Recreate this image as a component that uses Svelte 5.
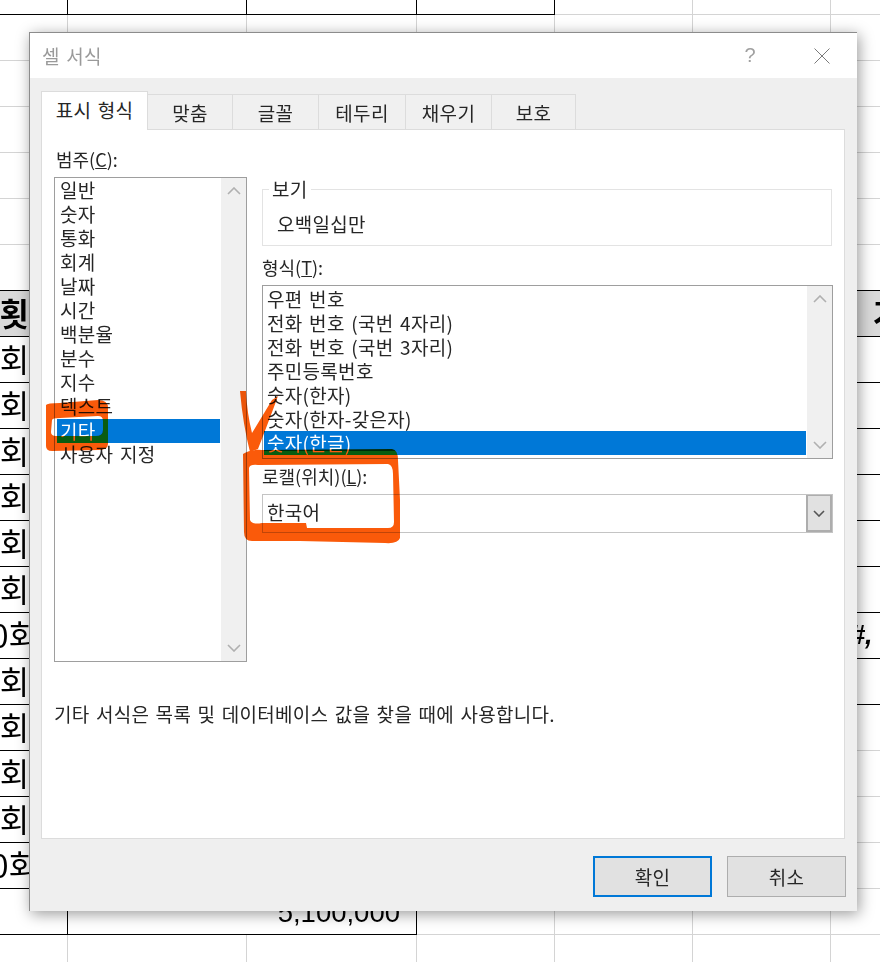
<script>
  // Sheet behind the dialog: rows of 46px, line index = (y - 14) / 46
  const rowCount = 22;
  const colCount = 7;
  const counts = ['1', '2', '3', '4', '5', '6', '10', '2', '3', '4', '5', '10'];

  const tabs = ['표시 형식', '맞춤', '글꼴', '테두리', '채우기', '보호'];
  const categories = ['일반', '숫자', '통화', '회계', '날짜', '시간', '백분율', '분수', '지수', '텍스트', '기타', '사용자 지정'];
  const formats = ['우편 번호', '전화 번호 (국번 4자리)', '전화 번호 (국번 3자리)', '주민등록번호', '숫자(한자)', '숫자(한자-갖은자)', '숫자(한글)'];

  let activeCategory = $state('기타');
  let activeFormat = $state('숫자(한글)');

  function cellClass(r, c) {
    let cls = 'cell';
    if (r === 0 && c <= 3) cls += ' bb br';
    if (r === 6 && c <= 2) cls += ' bb';
    if (r >= 7 && r <= 19 && c <= 2) cls += ' bb br';
    if (r === 6 && c === 6) cls += ' bb';
    if (r >= 7 && r <= 15 && c === 6) cls += ' bb';
    if (r === 7 && (c <= 2 || c === 6)) cls += ' head';
    return cls;
  }

  function cellText(r, c) {
    if (c === 0 && r === 7) return '횟수';
    if (c === 0 && r >= 8 && r <= 19) return counts[r - 8] + '회';
    if (c === 6 && r === 7) return '가격';
    if (c === 6 && r === 14) return '##,';
    return '';
  }
</script>

<div class="page">
  <div class="sheet">
    {#each Array(rowCount) as _, r}
      {#if r === 20}
        <div class="cell bb br"></div>
        <div class="cell bb br sum">5,100,000</div>
        {#each [3, 4, 5, 6] as c}
          <div class={cellClass(r, c)}></div>
        {/each}
      {:else}
        {#each Array(colCount) as _, c}
          <div
            class="{cellClass(r, c)} {c === 0 ? 'first' : ''} {c === 6 ? 'last' : ''} {r === 14 && c === 6 ? 'fmt' : ''}"
          >{cellText(r, c)}</div>
        {/each}
      {/if}
    {/each}
  </div>

  <div class="dialog">
    <div class="titlebar">
      <span class="title">셀 서식</span>
      <span class="help">?</span>
      <svg class="close" width="16" height="16" viewBox="0 0 16 16">
        <path d="M0.5 0.5L15.5 15.5M15.5 0.5L0.5 15.5" stroke="#7a7a7a" stroke-width="1" fill="none" />
      </svg>
    </div>

    <div class="body">
      <div class="tabs">
        {#each tabs as tab, i}
          <div class="tab" class:active={i === 0}>{tab}</div>
        {/each}
      </div>

      <div class="panel">
        <div class="columns">
          <div class="left">
            <div class="label">범주(<u>C</u>):</div>
            <div class="list catlist">
              <div class="items">
                {#each categories as item}
                  <div class="item" class:selected={item === activeCategory}>{item}</div>
                {/each}
              </div>
              <div class="scroll">
                <svg width="14" height="8" viewBox="0 0 14 8"><path d="M1 7L7 1L13 7" /></svg>
                <svg width="14" height="8" viewBox="0 0 14 8"><path d="M1 1L7 7L13 1" /></svg>
              </div>
            </div>
          </div>

          <div class="right">
            <fieldset class="sample">
              <legend>보기</legend>
              <div class="sample-text">오백일십만</div>
            </fieldset>

            <div class="label format-label">형식(<u>T</u>):</div>
            <div class="list fmtlist">
              <div class="items">
                {#each formats as item}
                  <div class="item" class:selected={item === activeFormat}>{item}</div>
                {/each}
              </div>
              <div class="scroll">
                <svg width="14" height="8" viewBox="0 0 14 8"><path d="M1 7L7 1L13 7" /></svg>
                <svg width="14" height="8" viewBox="0 0 14 8"><path d="M1 1L7 7L13 1" /></svg>
              </div>
            </div>

            <div class="label locale-label">로캘(위치)(<u>L</u>):</div>
            <div class="combo">
              <span class="combo-text">한국어</span>
              <div class="combo-btn">
                <svg width="12" height="7" viewBox="0 0 12 7"><path d="M1 1L6 6L11 1" /></svg>
              </div>
            </div>
          </div>
        </div>

        <div class="desc">기타 서식은 목록 및 데이터베이스 값을 찾을 때에 사용합니다.</div>
      </div>

      <div class="footer">
        <button class="btn primary">확인</button>
        <button class="btn">취소</button>
      </div>
    </div>
  </div>

  <!-- hand-drawn pen marks over the screenshot -->
  <svg class="marks" width="880" height="962" viewBox="0 0 880 962">
    <path
      fill-rule="evenodd"
      d="M46 405 Q47 403 60 403 L98 400 Q108 400 108 408 L108 444 Q108 450 98 450 L52 451 Q46 451 46 446 Z
         M52 420 Q52 418 60 418 L98 416 Q103 416 103 421 L103 430 Q103 436 96 436 L56 436 Q51 436 51 432 Z"
    />
    <path d="M240 391 L246 391 Q247 413 252 433 L272 400 L278 396 Q270 418 258 449 L250 452 Q243 425 240 391 Z" />
    <path
      fill-rule="evenodd"
      d="M243 454 Q250 449 262 450 L392 449 Q398 450 398 460 L400 500 L400 538 Q398 544 385 543 L300 541 L252 541 Q244 541 244 532 Z
         M249 468 Q250 464 258 465 L388 464 Q393 465 393 474 L394 522 Q394 528 388 528 L307 528 L306 523 L262 523 Q252 525 250 520 Z"
    />
  </svg>
  <!-- where the pen crosses the blue rows it turns green -->
  <svg class="marks-on-blue" width="880" height="962" viewBox="0 0 880 962">
    <path d="M103 419H108V443H57V436H96Q103 436 103 430Z" />
    <path d="M264 451H398V455H264Z" />
  </svg>
</div>

<style>
  :global(body) {
    margin: 0;
    background: #fff;
  }

  .page {
    position: relative;
    width: 880px;
    height: 962px;
    overflow: hidden;
    font-family: "Noto Sans CJK KR", "Noto Sans", sans-serif;
    color: #262626;
  }

  /* background spreadsheet */
  .sheet {
    display: grid;
    grid-template-columns: 98px 179px 170px 138px 138px 138px 169px;
    grid-auto-rows: 46px;
    margin: -31px 0 0 -30px;
    width: 1030px;
  }

  .cell {
    box-sizing: border-box;
    border-right: 1px solid #d4d4d4;
    border-bottom: 1px solid #d4d4d4;
    color: #000;
    font-size: 32px;
    line-height: 42px;
    white-space: nowrap;
    overflow: hidden;
  }

  .cell.bb {
    border-bottom-color: #000;
  }

  .cell.br {
    border-right-color: #000;
  }

  .first {
    text-align: center;
    padding-right: 26px;
  }

  .last {
    padding-left: 42px;
  }

  .head {
    background: #d9d9d9;
    font-weight: 700;
  }

  .head.first {
    padding: 0 0 0 21px;
  }

  .fmt {
    padding-left: 4px;
    font-family: "Liberation Sans", sans-serif;
    font-weight: 700;
    font-style: italic;
    font-size: 27px;
    line-height: 44px;
  }

  .sum {
    grid-column: span 2;
    text-align: right;
    padding-right: 16px;
    font-family: "Liberation Sans", sans-serif;
    font-size: 27.5px;
    line-height: 48px;
  }

  /* dialog */
  .dialog {
    position: absolute;
    left: 29px;
    top: 32px;
    width: 827px;
    height: 878px;
    border-top: 1px solid #8c8c8c;
    border-left: 1px solid #8c8c8c;
    box-shadow: 2px 3px 14px rgba(0, 0, 0, 0.4);
    display: flex;
    flex-direction: column;
    background: #efefef;
    font-size: 19px;
    letter-spacing: 0.3px;
    word-spacing: 2px;
  }

  .titlebar {
    height: 45px;
    background: #fff;
    display: flex;
    align-items: center;
    padding: 0 27px 0 12px;
    flex: none;
  }

  .title {
    color: #9a9a9a;
    font-size: 19px;
    flex: 1;
  }

  .help {
    color: #a0a0a0;
    font-size: 20px;
    font-family: "Liberation Sans", sans-serif;
    margin-right: 58px;
  }

  .body {
    flex: 1;
    padding: 13px 12px 0 11px;
    display: flex;
    flex-direction: column;
  }

  .tabs {
    display: flex;
    align-items: flex-end;
    height: 38px;
    flex: none;
  }

  .tab {
    box-sizing: border-box;
    height: 36px;
    margin-bottom: -1px;
    border: 1px solid #dcdcdc;
    border-left-width: 0;
    background: #f0f0f0;
    text-align: center;
    line-height: 35px;
    width: 86px;
    position: relative;
  }

  .tab:nth-child(1) {
    width: 107px;
    height: 39px;
    border-left-width: 1px;
    border-bottom: none;
    background: #fff;
    line-height: 36px;
    z-index: 1;
  }

  .tab:nth-child(2) {
    width: 85px;
  }

  .tab:nth-child(4) {
    width: 87px;
  }

  .tab:nth-child(6) {
    width: 84px;
  }

  .panel {
    box-sizing: border-box;
    height: 710px;
    flex: none;
    background: #fff;
    border: 1px solid #dcdcdc;
    padding: 17px 12px 0 12px;
  }

  .columns {
    display: flex;
    gap: 15px;
  }

  .left {
    width: 193px;
    flex: none;
  }

  .right {
    width: 571px;
    flex: none;
    padding-top: 30px;
  }

  .label {
    font-size: 18px;
    letter-spacing: 0;
    line-height: 24px;
    height: 24px;
    white-space: nowrap;
  }

  .left .label {
    margin-bottom: 6px;
    padding-left: 2px;
  }

  .list {
    box-sizing: border-box;
    border: 1px solid #9e9e9e;
    display: flex;
    background: #fff;
  }

  .catlist {
    height: 485px;
  }

  .fmtlist {
    height: 174px;
    width: 571px;
    margin-top: 6px;
  }

  .items {
    flex: 1;
    padding: 0 1px 0 2px;
    overflow: hidden;
  }

  .fmtlist .items {
    padding: 1px 1px 0 1px;
  }

  .item {
    height: 24px;
    line-height: 24px;
    padding-left: 3px;
    white-space: nowrap;
  }

  .catlist .item.selected {
    position: relative;
    top: 1px;
  }

  .item.selected {
    background: #0078d7;
    color: #fff;
  }

  .scroll {
    width: 25px;
    flex: none;
    background: #f0f0f0;
    display: flex;
    flex-direction: column;
    justify-content: space-between;
    align-items: center;
    padding: 9px 0;
  }

  .scroll svg path {
    fill: none;
    stroke: #b0b0b0;
    stroke-width: 1.6;
  }

  .sample {
    box-sizing: border-box;
    margin: 0;
    width: 570px;
    height: 69px;
    padding: 0 0 0 14px;
    border: 1px solid #e3e3e3;
    min-inline-size: 0;
  }

  .sample legend {
    margin-left: -8px;
    padding: 0 3px;
    line-height: 24px;
  }

  .sample-text {
    line-height: 24px;
    margin-top: 11px;
  }

  .format-label {
    margin-top: 9px;
  }

  .locale-label {
    margin-top: 5px;
  }

  .combo {
    box-sizing: border-box;
    margin-top: 6px;
    width: 571px;
    height: 39px;
    border: 1px solid #c4c4c4;
    display: flex;
    align-items: center;
  }

  .combo-text {
    flex: 1;
    padding: 0 0 4px 4px;
  }

  .combo-btn {
    box-sizing: border-box;
    width: 26px;
    height: 100%;
    background: #e1e1e1;
    border: 2px solid #adadad;
    border-top-width: 1px;
    display: flex;
    align-items: center;
    justify-content: center;
  }

  .combo-btn svg path {
    fill: none;
    stroke: #555;
    stroke-width: 1.6;
  }

  .desc {
    margin-top: 40px;
    line-height: 24px;
    white-space: nowrap;
    word-spacing: 1.8px;
  }

  .footer {
    flex: 1;
    display: flex;
    justify-content: flex-end;
    gap: 15px;
    padding: 17px 0 0 0;
    margin-right: -1px;
  }

  .btn {
    box-sizing: border-box;
    width: 119px;
    height: 41px;
    background: #e1e1e1;
    border: 1px solid #adadad;
    font-family: inherit;
    font-size: 19px;
    letter-spacing: 0.3px;
    color: #262626;
    padding: 0;
  }

  .btn.primary {
    width: 119px;
    border: 2px solid #0078d7;
  }

  /* pen marks, blended like a highlighter over the picture */
  .marks,
  .marks-on-blue {
    position: absolute;
    left: 0;
    top: 0;
    pointer-events: none;
  }

  .marks {
    mix-blend-mode: multiply;
  }

  .marks path {
    fill: #fa5a0a;
  }

  .marks-on-blue {
    mix-blend-mode: lighten;
  }

  .marks-on-blue path {
    fill: #0a5c10;
  }
</style>
